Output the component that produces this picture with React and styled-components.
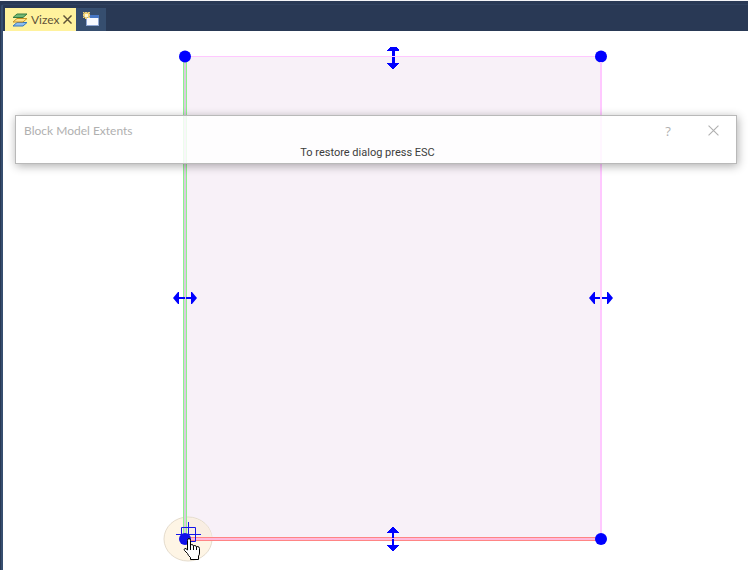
import React from 'react';
import styled, { createGlobalStyle } from 'styled-components';

const GlobalStyle = createGlobalStyle`
  * { box-sizing: border-box; }
  body { margin: 0; background: #fff; font-family: Lato, sans-serif; }
  button { margin: 0; padding: 0; border: 0; background: none; font: inherit; color: inherit; }
`;

const Shell = styled.div`
  display: flex;
  flex-direction: column;
  min-height: 100vh;
  overflow: hidden;
  background: #293955;
  border-top: 1px solid #f4f5f7;
`;

const Frame = styled.div`
  display: flex;
  flex: 1;
  flex-direction: column;
  margin: 3px 0 0 1px;
  border-top: 1px solid #30425f;
  border-left: 2px solid #364e6f;
  border-top-left-radius: 3px;
`;

const TabBar = styled.div`
  display: flex;
  height: 26px;
  padding: 3px 0 0 2px;
`;

const Tab = styled.div`
  display: flex;
  align-items: center;
  width: 71px;
  padding: 0 4px 0 7px;
  background: #fff29d;
  color: #5f5338;
`;

const TabLabel = styled.button`
  display: flex;
  flex: 1;
  align-items: center;
  gap: 3px;
  font-size: 12px;
  line-height: 16px;
`;

const CloseTab = styled.button`
  display: flex;
`;

const NewTab = styled.button`
  display: flex;
  align-items: center;
  width: 30px;
  padding-left: 7px;
  background: #364e6f;
`;

const Viewport = styled.main`
  position: relative;
  flex: 1;
  min-height: 539px;
  background: #fff;
`;

const Scene = styled.svg`
  display: block;
`;

const Dialog = styled.section`
  position: absolute;
  top: 84px;
  left: 12px;
  right: 11px;
  padding: 7px 17px 2px 8px;
  border: 1px solid #b9b9b9;
  background: rgba(255, 255, 255, 0.83);
  box-shadow: 1px 2px 9px rgba(0, 0, 0, 0.32);
`;

const TitleBar = styled.header`
  display: flex;
  align-items: center;
  height: 15px;
  color: #b0b0b0;
`;

const Title = styled.h1`
  flex: 1;
  margin: 0;
  font-weight: 400;
  font-size: 12px;
  line-height: 16px;
`;

const TitleButton = styled.button`
  display: flex;
  justify-content: center;
  width: 12px;
  margin-left: ${(p) => (p.$spaced ? 33 : 0)}px;
  font-family: "Open Sans", sans-serif;
  font-size: 13px;
  line-height: 16px;
`;

const Message = styled.p`
  margin: 7px 8px 0 0;
  text-align: center;
  color: #3c3c3c;
  font-family: Roboto, sans-serif;
  font-size: 11px;
  line-height: 16px;
`;

const LayersIcon = () => (
  <svg width="16" height="14" viewBox="0 0 16 14" aria-hidden="true">
    <path d="M5 9.5H15L11 13H1Z" fill="#8dbdf0" stroke="#3478c2" />
    <path d="M5 5.5H15L11 9H1Z" fill="#ffe08a" stroke="#c79222" />
    <path d="M5 1H15L11 4.5H1Z" fill="#72b875" stroke="#367c40" />
  </svg>
);

const CrossIcon = ({ size, width }) => (
  <svg width={size} height={size} viewBox="0 0 10 10" aria-hidden="true">
    <path d="M.5.5 9.5 9.5M9.5.5.5 9.5" fill="none" stroke="currentColor" strokeWidth={width} />
  </svg>
);

const NewWindowIcon = () => (
  <svg width="16" height="15" viewBox="0 0 16 15" aria-hidden="true">
    <rect x="3.5" y="3.5" width="12" height="10" fill="#f8faff" stroke="#8ea6d2" />
    <path d="M3 3H16V6H3Z" fill="#4777c5" />
    <path d="M0 0H1L2 1V0H4V1L5 0H7V1L6 2H7V4H6L7 5V6H5L4 5V7H2V5L1 6H0V5L1 4H0V2H1L0 1Z" fill="#f3d274" />
    <rect x="2" y="2" width="3" height="3" fill="#fff8d2" />
  </svg>
);

const VerticalHandle = ({ x, top, bottom, shaft, clipped }) => (
  <g fill="#00f" shapeRendering="crispEdges">
    <path d={clipped
      ? `M${x - 3} ${top}h6l3 3v1h-12v-1Z`
      : `M${x} ${top}l6 5v1h-12v-1Z`} />
    <path d={`M${x - 1} ${top + 3}h${shaft}V${bottom - 3}h-${shaft}Z`} />
    <path d={`M${x - 6} ${bottom - 6}h12v1l-6 5l-6-5Z`} />
  </g>
);

const HorizontalHandle = ({ x, y }) => (
  <path
    fill="#00f"
    d={`M${x - 12} ${y}l5-6h1v5h12v-5h1l5 6l-5 6h-1v-5h-12v5h-1Z`}
  />
);

const Corner = ({ x, y }) => <circle cx={x} cy={y} r="6" fill="#00f" />;

const HandCursor = () => (
  <g transform="translate(184 538)">
    <path
      d="M3.5 2.5Q3.5.5 5 .5T6.5 2.5V7.5Q7 6.5 8 6.5T9.5 8Q10 7.5 11 7.5T12.5 9Q13 8.5 14 8.5T15.5 10.5V15Q15.5 17 14.5 18V21.5H6.5V19.5L4.5 17.5 3.5 15.5 .5 12.5Q-.2 11 .8 10.5T3.5 12Z"
      fill="#fff" stroke="#000"
    />
    <path d="M6.5 7V12M9.5 8V12M12.5 9V12" stroke="#000" />
  </g>
);

const ModelScene = () => (
  <Scene width="745" height="539" viewBox="3 31 745 539" role="img" aria-label="Block model extents">
    <rect x="185" y="57" width="416" height="481" fill="#f8f1f8" />
    <ellipse cx="188" cy="539" rx="24" ry="22" fill="#fef5e5" stroke="#e5dccd" />
    <path d="M187 518V537H212A24 22 0 0 0 187 518Z" fill="#f9eee3" />
    <path d="M184 56H187V538H184Z" fill="#dcc9df" />
    <path d="M183.5 57V538M186.5 57V538" stroke="#8cf48c" />
    <path d="M187 538H601V540H187Z" fill="#ffb9dc" />
    <path d="M187 537.5H601M187 540.5H601" stroke="#ff8585" />
    <Corner x="185" y="56.5" />
    <Corner x="601" y="56.5" />
    <Corner x="601" y="539" />
    <VerticalHandle x={393} top={47} bottom={69} shaft={3} clipped />
    <VerticalHandle x={393} top={527} bottom={551} shaft={2} />
    <HorizontalHandle x={185} y={298} />
    <HorizontalHandle x={601} y={298} />
    <path d="M191 56H595V57H191Z" fill="#ffc8ff" />
    <path d="M600 62H602V533H600Z" fill="#ffc8ff" />
    <path d="M387 538H399V539H387Z" fill="#ffb9dc" />
    <path d="M185 292H186V304H185Z" fill="#dcc9df" />
    <path d="M188.5 522V539M176 534.5H201M181.5 527.5H195.5V541.5H181.5Z" fill="none" stroke="#1515e8" />
    <circle cx="185" cy="539" r="6" fill="#1111e8" />
    <HandCursor />
  </Scene>
);

export default function App() {
  return (
    <>
      <GlobalStyle />
      <Shell>
        <Frame>
          <TabBar>
            <Tab>
              <TabLabel><LayersIcon />Vizex</TabLabel>
              <CloseTab aria-label="Close Vizex"><CrossIcon size={9} width={1.6} /></CloseTab>
            </Tab>
            <NewTab aria-label="New window"><NewWindowIcon /></NewTab>
          </TabBar>
          <Viewport>
            <ModelScene />
            <Dialog role="dialog" aria-labelledby="dialog-title">
              <TitleBar>
                <Title id="dialog-title">Block Model Extents</Title>
                <TitleButton aria-label="Help">?</TitleButton>
                <TitleButton aria-label="Close" $spaced><CrossIcon size={11} width={1} /></TitleButton>
              </TitleBar>
              <Message>To restore dialog press ESC</Message>
            </Dialog>
          </Viewport>
        </Frame>
      </Shell>
    </>
  );
}
